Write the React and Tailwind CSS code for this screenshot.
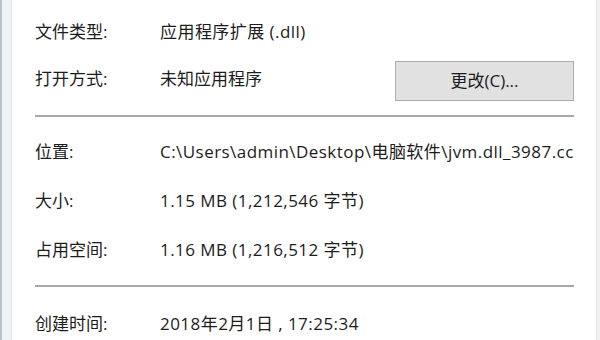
import React from "react";

const font = { fontFamily: '"Open Sans", "Noto Sans CJK SC", sans-serif' };

function Row({ label, value, className = "" }) {
  return (
    <div className={`flex items-center h-[24px] ${className}`}>
      <div className="w-[125px] shrink-0">{label}</div>
      <div className="w-[414px] overflow-hidden whitespace-nowrap tracking-[0.45px]">{value}</div>
    </div>
  );
}

export default function App() {
  return (
    <div
      className="w-[600px] h-[340px] flex bg-white text-[17px] text-[#1c1c1c] overflow-hidden"
      style={font}
    >
      <div className="w-[12px] shrink-0 border-l-[2px] border-[#b9c2cf] border-r border-r-[#dfe4ea] bg-[#eef1f5]" />
      <div className="flex-1 flex flex-col pl-[23px] pr-[22px] pt-[20px]">
        <Row label="文件类型:" value="应用程序扩展 (.dll)" />
        <div className="flex items-center h-[40px] mt-[17px]">
          <div className="w-[125px] shrink-0 -mt-[4px]">打开方式:</div>
          <div className="w-[235px] shrink-0 -mt-[4px]">未知应用程序</div>
          <div className="flex-1 h-[40px] flex items-center justify-center bg-[#e1e1e1] border border-[#adadad]">
            更改(C)...
          </div>
        </div>
        <div className="mt-[14px] h-[2px] bg-[#a8a8a8]" />
        <Row className="mt-[23px]" label="位置:" value="C:\Users\admin\Desktop\电脑软件\jvm.dll_3987.cc" />
        <Row className="mt-[25px]" label="大小:" value="1.15 MB (1,212,546 字节)" />
        <Row className="mt-[25px]" label="占用空间:" value="1.16 MB (1,216,512 字节)" />
        <div className="mt-[23px] h-[2px] bg-[#a8a8a8]" />
        <Row className="mt-[25px]" label="创建时间:" value="2018年2月1日 , 17:25:34" />
      </div>
      <div className="w-[10px] shrink-0 border-l border-[#e3e3e3] bg-[#f0f0f0]" />
    </div>
  );
}
